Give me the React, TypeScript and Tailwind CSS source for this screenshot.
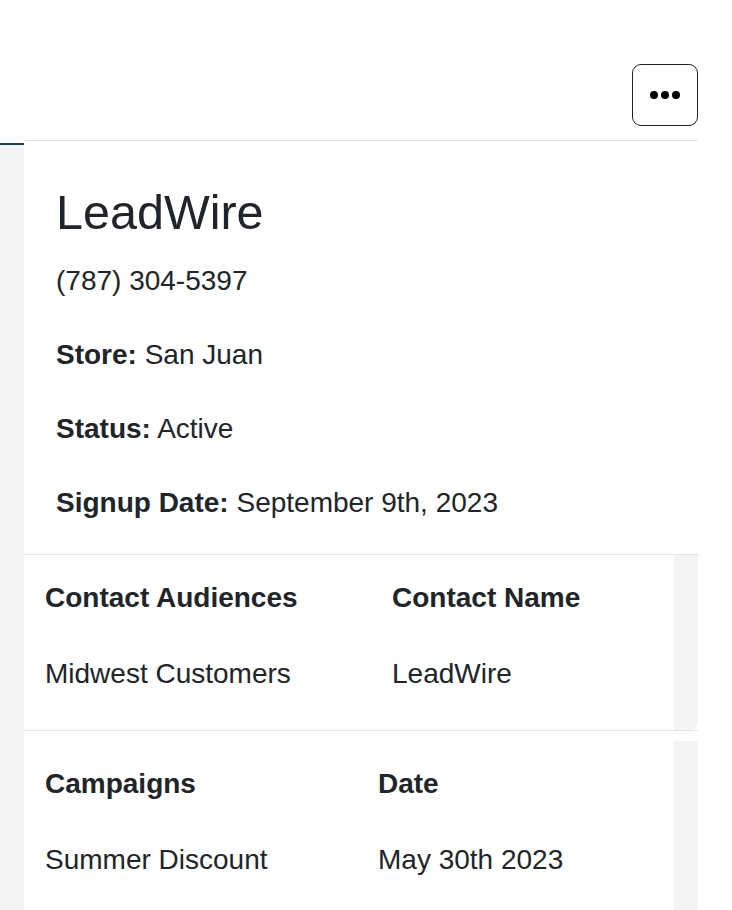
import React from "react";

const details = [
  { label: "Store:", value: "San Juan" },
  { label: "Status:", value: "Active" },
  { label: "Signup Date:", value: "September 9th, 2023" },
];

const MoreButton = () => (
  <button
    type="button"
    aria-label="More actions"
    className="w-[66px] h-[62px] rounded-[9px] border border-[#212529] bg-white flex items-center justify-center"
  >
    <svg width="34" height="10" viewBox="0 0 34 10" fill="#000">
      <circle cx="6" cy="5" r="4" />
      <circle cx="17" cy="5" r="4" />
      <circle cx="28" cy="5" r="4" />
    </svg>
  </button>
);

interface InfoTableProps {
  headers: [string, string];
  row: [string, string];
  firstCol: string;
  className?: string;
}

const InfoTable: React.FC<InfoTableProps> = ({ headers, row, firstCol, className }) => (
  <div className={`flex ${className ?? ""}`}>
    <div className="w-[650px] bg-white pl-[21px]">
      <div className="flex pt-[22px] pb-[34px] font-bold">
        <div className={firstCol}>{headers[0]}</div>
        <div>{headers[1]}</div>
      </div>
      <div className="flex pb-[35px]">
        <div className={firstCol}>{row[0]}</div>
        <div>{row[1]}</div>
      </div>
    </div>
    <div className="w-[24px] bg-[#f4f4f4] rounded-br-[8px]" />
  </div>
);

export default function App() {
  return (
    <div
      className="w-[732px] min-h-[910px] bg-white text-[#212529] overflow-hidden"
      style={{ fontFamily: '"Liberation Sans", Arial, sans-serif' }}
    >
      {/* top bar */}
      <div className="h-[140px] flex justify-end items-start pt-[64px] pr-[34px]">
        <MoreButton />
      </div>

      <div className="flex min-h-[770px]">
        {/* left rail */}
        <div className="w-[24px] mt-[3px] border-t-2 border-[#1f4447] bg-[#f4f4f4]" />

        {/* main */}
        <div className="w-[674px] border-t border-[#e5e5e5]">
          <div className="px-[32px] pt-[43px]">
            <h2 className="text-[48.5px] leading-[57.6px] font-normal mb-[18px]">LeadWire</h2>
            <p className="text-[28px] leading-[42px] mb-[32px]">(787) 304-5397</p>
            {details.map((d, i) => (
              <p
                key={d.label}
                className={`text-[28px] leading-[42px] ${i === details.length - 1 ? "mb-[30px]" : "mb-[32px]"}`}
              >
                <span className="font-bold">{d.label}</span> {d.value}
              </p>
            ))}
          </div>

          <div className="text-[28px] leading-[42px]">
            <div className="border-t border-b border-[#e5e5e5]">
              <InfoTable
                headers={["Contact Audiences", "Contact Name"]}
                row={["Midwest Customers", "LeadWire"]}
                firstCol="w-[347px]"
              />
            </div>
            <InfoTable
              className="mt-[10px]"
              headers={["Campaigns", "Date"]}
              row={["Summer Discount", "May 30th 2023"]}
              firstCol="w-[333px]"
            />
          </div>
        </div>

        <div className="w-[34px]" />
      </div>
    </div>
  );
}
